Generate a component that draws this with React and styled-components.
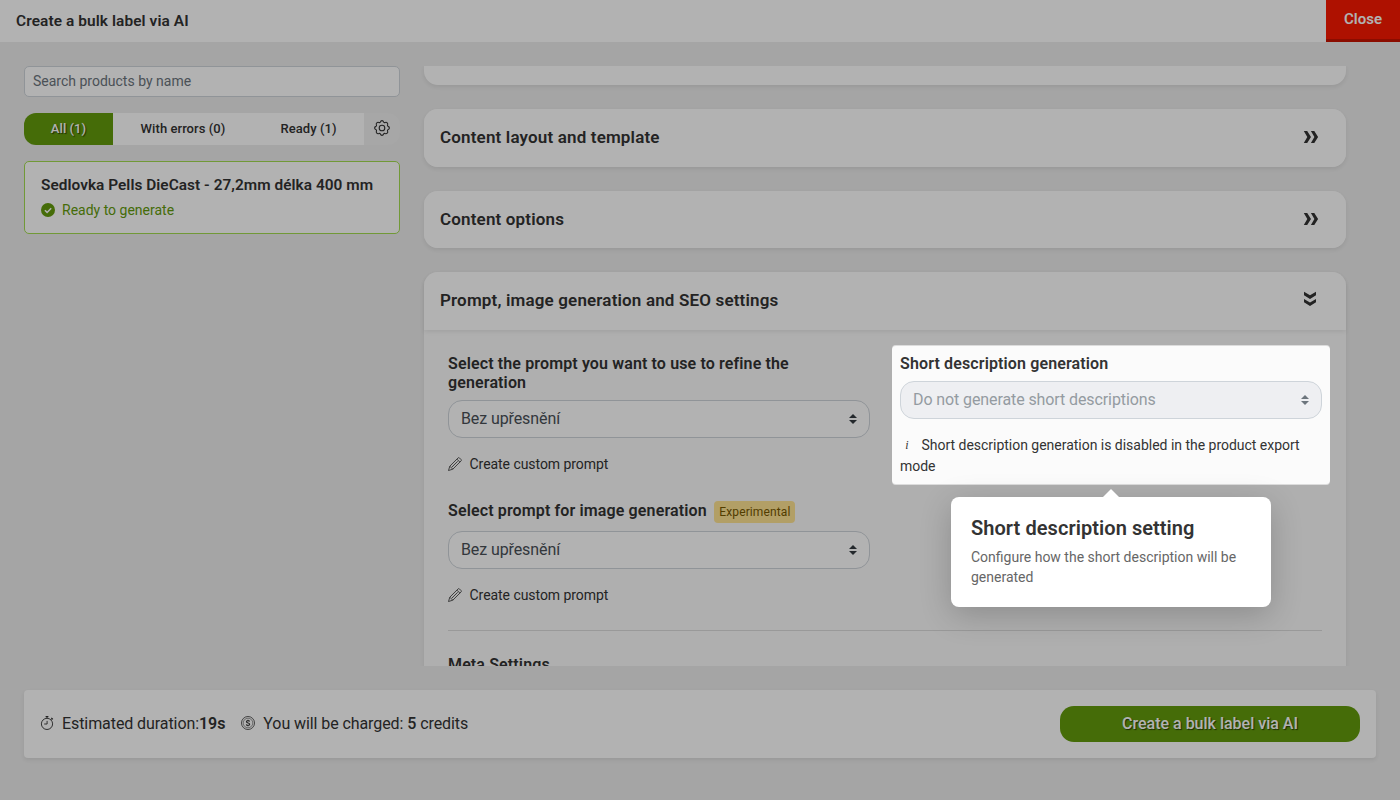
import styled, { createGlobalStyle } from 'styled-components';

const GlobalStyle = createGlobalStyle`
* {
  box-sizing: border-box;
}
body {
  margin: 0;
  background: #ececec;
  color: #333;
  font-family: Roboto, "Liberation Sans", sans-serif;
  font-size: 14px;
  overflow: hidden;
}
`

const Page = styled.div`
  height: 800px;
  display: flex;
  flex-direction: column;
  position: relative;
  overflow: hidden;
`
const Header = styled.header`
  height: 42px;
  flex: none;
  display: flex;
  justify-content: space-between;
  background: #fff;
`
const HeaderTitle = styled.h1`
  margin: 0;
  padding-left: 16px;
  font-size: 15.4px;
  font-weight: 600;
  letter-spacing: .1px;
  line-height: 42px;
`
const CloseButton = styled.button`
  width: 74px;
  border: 0;
  border-bottom: 3px solid #c81400;
  background: #fa1900;
  color: #fff;
  font: 600 15px/36px Roboto, sans-serif;
  padding: 0 0 2px;
`
const Main = styled.main`
  display: flex;
  gap: 24px;
  height: 624px;
  padding: 24px 54px 0 24px;
`
const Sidebar = styled.aside`
  width: 376px;
  flex: none;
`
const Search = styled.input`
  display: block;
  width: 100%;
  height: 31px;
  padding: 0 8px 2px;
  border: 1px solid #ced4da;
  border-radius: 5px;
  background: #fff;
  font: 14px Roboto, sans-serif;
  &::placeholder {
    color: #6c757d;
    opacity: 1;
  }
`
const Tabs = styled.div`
  display: flex;
  height: 32px;
  margin: 16px 0;
  border-radius: 12px;
  overflow: hidden;
`
const Tab = styled.button`
  width: ${(props) => props.$width}px;
  flex: none;
  border: 0;
  padding: 0 0 2px;
  background: ${(props) => (props.$active ? '#639b0c' : '#fff')};
  color: ${(props) => (props.$active ? '#fff' : '#333')};
  text-shadow: ${(props) => (props.$active ? '1px 1px 1px rgba(0,0,0,.6)' : 'none')};
  font: 500 13px Roboto, sans-serif;
  letter-spacing: .06px;
`
const GearTab = styled.button`
  flex: 1;
  border: 0;
  background: #efefef;
  color: #333;
  display: flex;
  align-items: center;
  justify-content: center;
  padding: 0 0 2px;
`
const Product = styled.div`
  height: 73px;
  padding: 13px 16px;
  border: 1px solid #a2dc50;
  border-radius: 5px;
  background: #fff;
`
const ProductName = styled.div`
  font-size: 15.4px;
  font-weight: 600;
  letter-spacing: .04px;
  line-height: 20px;
  white-space: nowrap;
`
const Status = styled.div`
  display: flex;
  align-items: center;
  gap: 7px;
  margin-top: 5px;
  line-height: 20px;
  color: #639b0c;
`
const Content = styled.div`
  flex: 1;
  display: flex;
  flex-direction: column;
  gap: 24px;
  margin: 0 -12px;
  padding: 0 12px;
  overflow: hidden;
`
const Card = styled.section`
  flex: none;
  border-radius: 14px;
  background: #fbfbfb;
  box-shadow: 0 2px 4px rgba(0, 0, 0, .075);
`
const CardTail = styled.div`
  height: 19px;
  flex: none;
  border-radius: 0 0 14px 14px;
  background: #fff;
  box-shadow: 0 2px 4px rgba(0, 0, 0, .075);
`
const CardHeader = styled.div`
  height: 57.6px;
  padding: 0 27px 0 16px;
  display: flex;
  align-items: center;
  justify-content: space-between;
  border-radius: ${(props) => (props.$open ? '14px 14px 0 0' : '14px')};
  background: #fff;
  box-shadow: ${(props) => (props.$open ? '0 2px 4px rgba(0,0,0,.075)' : 'none')};
`
const CardTitle = styled.h2`
  margin: 0;
  padding-bottom: 1px;
  font-size: 17px;
  font-weight: 600;
  letter-spacing: .16px;
`
const CardBody = styled.div`
  padding: 24px;
`
const Columns = styled.div`
  display: grid;
  grid-template-columns: 1fr 1fr;
  gap: 30px;
  height: 276px;
`
const Field = styled.div`
  margin-bottom: ${(props) => props.$space || 0}px;
`
const Label = styled.div`
  display: flex;
  align-items: center;
  gap: 7.5px;
  max-width: 400px;
  min-height: ${(props) => props.$height}px;
  margin-bottom: 8px;
  font-size: 16px;
  font-weight: 600;
  letter-spacing: .13px;
  line-height: 19.2px;
`
const LabelText = styled.span`
  padding-bottom: ${(props) => props.$lift || 2}px;
`
const Badge = styled.span`
  padding: 0 5px;
  border-radius: 4px;
  background: #ffe493;
  color: #765800;
  font-size: 12px;
  font-weight: 400;
  letter-spacing: .12px;
  line-height: 22px;
`
const SelectBox = styled.div`
  display: flex;
  align-items: center;
  justify-content: space-between;
  height: 38px;
  padding: 0 12px;
  border: 1px solid #ced4da;
  border-radius: 14px;
  background: ${(props) => (props.$disabled ? '#eeeff2' : '#fff')};
  color: ${(props) => (props.$disabled ? '#949ba1' : '#495057')};
  font-size: 16px;
  letter-spacing: -.1px;
  line-height: 19px;
`
const PromptLink = styled.div`
  display: flex;
  align-items: center;
  gap: 7.5px;
  margin-top: 16px;
  letter-spacing: -.05px;
  line-height: 21px;
  svg {
    margin-bottom: 1px;
  }
`
const Note = styled.div`
  margin-top: 16px;
  letter-spacing: -.02px;
  line-height: 21px;
`
const NoteIcon = styled.i`
  display: inline-block;
  width: 14px;
  margin-right: 7.5px;
  text-align: center;
  vertical-align: 1px;
  font: italic 12px/12px "Liberation Serif", serif;
`
const Divider = styled.div`
  border-top: 1px solid #dcdcdc;
  margin-bottom: 24px;
`
const Footer = styled.footer`
  display: flex;
  align-items: center;
  height: 68px;
  margin: 24px 24px 0;
  padding: 0 16px;
  border-radius: 4px;
  background: #fff;
  box-shadow: 0 2px 4px rgba(0, 0, 0, .075);
  font-size: 16px;
  letter-spacing: -.08px;
`
const Info = styled.div`
  display: flex;
  align-items: center;
  gap: 8px;
  margin-right: 16px;
  padding-bottom: 2px;
  line-height: 19px;
  white-space: pre;
`
const Strong = styled.b`
  font-weight: ${(props) => props.$weight || 600};
`
const Submit = styled.button`
  width: 300px;
  height: 36px;
  margin-left: auto;
  padding: 0 0 2px;
  border: 0;
  border-radius: 14px;
  background: #639b0c;
  color: #fff;
  text-shadow: 1px 1px 1px rgba(0, 0, 0, .6);
  font: 500 16px Roboto, sans-serif;
`
// dims everything around the highlighted field
const Spotlight = styled.div`
  position: absolute;
  left: 892px;
  top: 345px;
  width: 438px;
  height: 140px;
  border-radius: 4px;
  box-shadow: 0 0 0 2000px rgba(0, 0, 0, .3), inset 0 1px rgba(0, 0, 0, .12), inset 0 -1px rgba(0, 0, 0, .12);
`
const Popover = styled.div`
  position: absolute;
  left: 951px;
  top: 497px;
  width: 320px;
  height: 110px;
  padding: 20px;
  border-radius: 8px;
  background: #fff;
  box-shadow: 0 8px 32px rgba(0, 0, 0, .2);
  &::before {
    content: '';
    position: absolute;
    left: 152px;
    top: -8px;
    border: 8px solid transparent;
    border-top: 0;
    border-bottom-color: #fff;
  }
`
const PopoverTitle = styled.h3`
  margin: 0 0 8px;
  font-size: 20px;
  font-weight: 600;
  letter-spacing: .06px;
  line-height: 22px;
`
const PopoverText = styled.p`
  margin: 0;
  color: #666;
  line-height: 20px;
`

const GearIcon = () => (
  <svg width="16" height="16" viewBox="0 0 16 16" fill="none" stroke="currentColor" strokeWidth="1.1" strokeLinejoin="round">
    <path d="M6.400 2Q6.800.6 8 .6T9.600 2Q10.200 2.900 11.200 2.400Q12.400 1.900 13.200 2.800T13.600 4.800Q13.100 5.800 14 6.400Q15.400 6.800 15.400 8T14 9.600Q13.100 10.200 13.600 11.200Q14.100 12.400 13.200 13.200T11.200 13.600Q10.200 13.100 9.600 14Q9.200 15.400 8 15.400T6.400 14Q5.800 13.100 4.800 13.600Q3.600 14.100 2.800 13.200T2.400 11.200Q2.900 10.200 2 9.600Q.6 9.200 .6 8T2 6.400Q2.900 5.800 2.400 4.800Q1.900 3.600 2.800 2.800T4.800 2.400Q5.800 2.900 6.400 2z" />
    <circle cx="8" cy="8" r="2.800" />
  </svg>
)

const CheckIcon = () => (
  <svg width="14" height="14" viewBox="0 0 14 14">
    <circle cx="7" cy="7" r="7" fill="currentColor" />
    <path d="M3.900 7.200l2.200 2.200 4.100-4.200" fill="none" stroke="#fff" strokeWidth="1.500" />
  </svg>
)

const Chevrons = styled.svg`
  width: 16px;
  height: 16px;
  margin-bottom: 1px;
  fill: currentColor;
  transform: ${(props) => (props.$down ? 'translate(-1px, -1px) rotate(90deg)' : 'none')};
`

const ChevronsIcon = ({ down }) => (
  <Chevrons viewBox="0 0 16 16" $down={down}>
    <path d="M.8 2h3.400l3.800 6-3.800 6H.8l3.500-6zM7.900 2h3.400l3.800 6-3.800 6H7.900l3.500-6z" />
  </Chevrons>
)

const ArrowsIcon = ({ color = '#343a40' }) => (
  <svg width="8" height="10" viewBox="0 0 4 5">
    <path fill={color} d="M2 0L0 2h4zm0 5L0 3h4z" />
  </svg>
)

const PencilIcon = () => (
  <svg width="14" height="14" viewBox="0 0 14 14" fill="none" stroke="currentColor" strokeWidth=".8" strokeLinejoin="round">
    <path d="M.5 13.500l1.300-4.300L10.100.9c.4-.4.9-.4 1.300 0l1.700 1.700c.4.4.4.9 0 1.300l-8.300 8.300zM1.800 9.200l3 3M8.900 2.100l3 3M3.900 10.100l5.800-5.800" />
  </svg>
)

const TimerIcon = () => (
  <svg width="14" height="14" viewBox="0 0 14 14" fill="none" stroke="currentColor" strokeWidth=".9">
    <circle cx="7" cy="7.900" r="5.600" />
    <path d="M7 2.300V.6M10.900 3.800l1.200-1.200M7.100 4.900v3.100H4.200" />
    <path d="M5.600.7h2.800M11.300 1.900l1.500 1.500" strokeWidth="1.300" />
  </svg>
)

const CoinIcon = () => (
  <svg width="14" height="14" viewBox="0 0 14 14" fill="none" stroke="currentColor" strokeWidth=".8">
    <circle cx="7" cy="7" r="6.500" />
    <circle cx="7" cy="7" r="4.800" strokeWidth=".5" />
    <path strokeWidth="1.100" d="M8.600 5.500c-.2-.6-.8-.9-1.600-.9-.9 0-1.600.4-1.600 1.100 0 1.600 3.300.9 3.300 2.500 0 .7-.7 1.200-1.700 1.200-.9 0-1.600-.4-1.700-1.100M7 3.700v.9M7 9.400v.9" />
  </svg>
)

const PromptSelect = () => (
  <>
    <SelectBox>
      <LabelText>Bez upřesnění</LabelText>
      <ArrowsIcon />
    </SelectBox>
    <PromptLink><PencilIcon />Create custom prompt</PromptLink>
  </>
)

const App = () => {
  return (
    <Page>
      <GlobalStyle />
      <Header>
        <HeaderTitle>Create a bulk label via AI</HeaderTitle>
        <CloseButton>Close</CloseButton>
      </Header>
      <Main>
        <Sidebar>
          <Search placeholder="Search products by name" />
          <Tabs>
            <Tab $active $width={89}>All (1)</Tab>
            <Tab $width={140}>With errors (0)</Tab>
            <Tab $width={111}>Ready (1)</Tab>
            <GearTab><GearIcon /></GearTab>
          </Tabs>
          <Product>
            <ProductName>Sedlovka Pells DieCast - 27,2mm délka 400 mm</ProductName>
            <Status><CheckIcon />Ready to generate</Status>
          </Product>
        </Sidebar>
        <Content>
          <CardTail />
          <Card>
            <CardHeader>
              <CardTitle>Content layout and template</CardTitle>
              <ChevronsIcon />
            </CardHeader>
          </Card>
          <Card>
            <CardHeader>
              <CardTitle>Content options</CardTitle>
              <ChevronsIcon />
            </CardHeader>
          </Card>
          <Card>
            <CardHeader $open>
              <CardTitle>Prompt, image generation and SEO settings</CardTitle>
              <ChevronsIcon down />
            </CardHeader>
            <CardBody>
              <Columns>
                <div>
                  <Field $space={26}>
                    <Label $height={38.4}>Select the prompt you want to use to refine the generation</Label>
                    <PromptSelect />
                  </Field>
                  <Field>
                    <Label $height={22}>
                      <LabelText $lift={3}>Select prompt for image generation</LabelText>
                      <Badge>Experimental</Badge>
                    </Label>
                    <PromptSelect />
                  </Field>
                </div>
                <Field>
                  <Label $height={19.2}>Short description generation</Label>
                  <SelectBox $disabled>
                    Do not generate short descriptions
                    <ArrowsIcon color="#6c757d" />
                  </SelectBox>
                  <Note>
                    <NoteIcon>i</NoteIcon>
                    Short description generation is disabled in the product export mode
                  </Note>
                </Field>
              </Columns>
              <Divider />
              <Label $height={19.2}>Meta Settings</Label>
            </CardBody>
          </Card>
        </Content>
      </Main>
      <Footer>
        <Info><TimerIcon /><span>Estimated duration:<Strong>19s</Strong></span></Info>
        <Info><CoinIcon /><span>You will be charged: <Strong $weight={500}>5</Strong> credits</span></Info>
        <Submit>Create a bulk label via AI</Submit>
      </Footer>
      <Spotlight />
      <Popover>
        <PopoverTitle>Short description setting</PopoverTitle>
        <PopoverText>Configure how the short description will be generated</PopoverText>
      </Popover>
    </Page>
  )
}

export default App
